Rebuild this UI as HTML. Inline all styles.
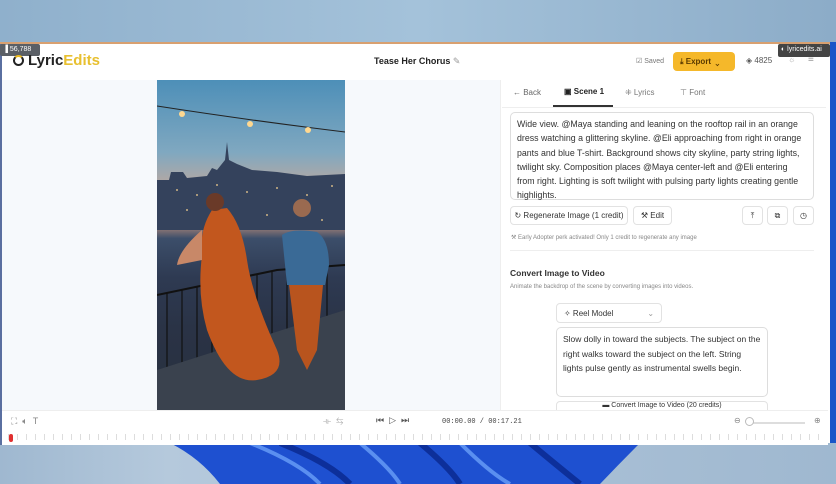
<!DOCTYPE html>
<html><head><meta charset="utf-8"><style>
*{box-sizing:border-box;margin:0;padding:0}
body{width:836px;height:484px;overflow:hidden;position:relative;font-family:"Liberation Sans",sans-serif;background:linear-gradient(90deg,#8fb0cc,#a4c2da 50%,#8cacc8);}
.abs{position:absolute}
.win{left:0;top:42px;width:830px;height:401px;background:#fff;border-top:2px solid #d8a070;}
.t{position:absolute;white-space:nowrap;color:#333}
.btn{position:absolute;border:1px solid #e2e2e2;border-radius:4px;background:#fff;font-size:8px;color:#333;display:flex;align-items:center;justify-content:center;gap:4px}
</style></head><body>
<div class="abs" style="left:0;top:443px;width:836px;height:41px;background:linear-gradient(90deg,#9fb8d0,#b5c9dc 20%,#9fb8d0)"></div>
<svg class="abs" style="left:160px;top:443px" width="490" height="41"><path d="M10 0 L480 0 Q460 20 440 41 L60 41 Q40 15 10 0Z" fill="#1e50d0"/><path d="M90 0 Q140 20 160 41 M200 0 Q230 25 240 41 M300 0 Q330 30 350 41" stroke="#5a8ff0" stroke-width="4" fill="none"/><path d="M120 0 Q170 20 190 41 M260 0 Q290 25 300 41 M370 0 Q400 25 420 41" stroke="#0d2f9a" stroke-width="6" fill="none"/></svg>
<div class="abs" style="left:828px;top:42px;width:8px;height:401px;background:#1a55c8"></div>
<div class="win abs">
 <div class="abs" style="left:0;top:0;width:2px;height:401px;background:#5a6fa0"></div>
 <div class="abs" style="left:0;top:0;width:40px;height:12px;background:#5a5f66;border-radius:2px;color:#fff;font-size:7px;padding:2px 3px">▐ 56,788</div>
 <div class="abs" style="left:13px;top:11px;width:11px;height:11px;border:2px solid #222;border-radius:50%;border-top-color:#e8b820"></div>
 <div class="t" style="left:28px;top:8px;font-size:15px;font-weight:bold;color:#222">Lyric<span style="color:#e8c030">Edits</span></div>
 <div class="t" style="left:374px;top:12px;font-size:9px;font-weight:bold;color:#222">Tease Her Chorus <span style="color:#999;font-weight:normal">✎</span></div>
 <div class="t" style="left:636px;top:13px;font-size:7px;color:#777">☑ Saved</div>
 <div class="abs" style="left:673px;top:8px;width:62px;height:19px;background:#f5b82a;border-radius:4px;font-size:8px;font-weight:bold;color:#5a3a00;padding:5px 7px">⤓ Export &nbsp;⌄</div>
 <div class="t" style="left:746px;top:12px;font-size:8px;color:#555">◈ 4825</div>
 <div class="t" style="left:788px;top:11px;font-size:8px;color:#aaa">☼</div>
 <div class="t" style="left:808px;top:10px;font-size:10px;color:#999">≡</div>
 <div class="abs" style="left:778px;top:0;width:52px;height:13px;background:#444;color:#fff;font-size:7px;padding:2px 3px;border-radius:2px">◐ lyricedits.ai</div>
 <div class="abs" style="left:2px;top:36px;width:498px;height:330px;background:#f6f9fc"></div>
 <div class="abs" style="left:157px;top:36px;width:188px;height:330px;overflow:hidden;background:linear-gradient(180deg,#4d8fb8 0%,#80a8c0 22%,#d8a890 38%,#e0a080 42%,#3c4e6a 48%,#2e3a52 60%,#2a3346 75%,#27303e 100%)">
  <svg width="188" height="330" style="position:absolute;left:0;top:0">
   <path d="M0 26 Q90 40 188 52" stroke="#222" fill="none"/>
   <circle cx="25" cy="34" r="3" fill="#ffd890"/><circle cx="93" cy="44" r="3" fill="#ffd890"/><circle cx="151" cy="50" r="3" fill="#ffd890"/>
   <path d="M0 150 L0 100 L12 100 L14 92 L26 92 L30 98 L50 96 L55 88 L60 90 L68 80 L70 62 L72 80 L80 84 L95 90 L120 92 L150 96 L188 94 L188 150Z" fill="#34425c"/>
   <g fill="#f4d090" opacity=".8"><circle cx="20" cy="110" r="1"/><circle cx="40" cy="115" r="1"/><circle cx="60" cy="105" r="1"/><circle cx="90" cy="112" r="1"/><circle cx="120" cy="108" r="1"/><circle cx="150" cy="115" r="1"/><circle cx="175" cy="106" r="1"/><circle cx="30" cy="130" r="1"/><circle cx="110" cy="135" r="1"/><circle cx="165" cy="140" r="1"/></g>
   <path d="M0 215 L120 190 L188 185" stroke="#111" stroke-width="2" fill="none"/>
   <g stroke="#111" stroke-width="1.2"><path d="M10 213V290M25 210V285M40 207V280M55 204V275M70 201V270M85 198V265M100 195V260M115 192V255M130 190V250M170 186V240"/></g>
   <path d="M0 290 L188 230 L188 330 L0 330Z" fill="#3a424e"/>
   <path d="M55 130 Q42 150 45 175 Q40 215 50 250 Q70 305 100 300 Q130 295 120 270 Q95 215 90 180 Q85 145 70 128Z" fill="#c2571e"/>
   <path d="M45 150 Q22 170 20 185 L45 180Z" fill="#c88868"/>
   <circle cx="58" cy="122" r="9" fill="#6a3a28"/>
   <path d="M125 155 Q135 148 160 152 Q172 160 172 185 L168 205 L130 205 Z" fill="#3a6a96"/>
   <path d="M132 205 L166 205 L160 270 L150 290 L140 270Z" fill="#b8541e"/>
   <circle cx="145" cy="128" r="9" fill="#9a6a50"/>
  </svg>
 </div>
 <div class="abs" style="left:500px;top:36px;width:328px;height:330px;background:#fff;border-left:1px solid #eee"></div>
 <div class="t" style="left:513px;top:44px;font-size:8px;color:#666">← Back</div>
 <div class="t" style="left:564px;top:43px;font-size:8px;color:#222;font-weight:bold">▣ Scene 1</div>
 <div class="abs" style="left:553px;top:61px;width:60px;height:2px;background:#333"></div>
 <div class="t" style="left:625px;top:44px;font-size:8px;color:#777">⁜ Lyrics</div>
 <div class="t" style="left:680px;top:44px;font-size:8px;color:#777">⊤ Font</div>
 <div class="abs" style="left:502px;top:63px;width:324px;height:1px;background:#eee"></div>
 <div class="abs" style="left:510px;top:68px;width:304px;height:88px;border:1px solid #ddd;border-radius:5px;padding:4px 6px;font-size:8.8px;line-height:14.3px;color:#333">Wide view. @Maya standing and leaning on the rooftop rail in an orange dress watching a glittering skyline. @Eli approaching from right in orange pants and blue T-shirt. Background shows city skyline, party string lights, twilight sky. Composition places @Maya center-left and @Eli entering from right. Lighting is soft twilight with pulsing party lights creating gentle highlights.</div>
 <div class="btn" style="left:510px;top:162px;width:118px;height:19px">↻ Regenerate Image (1 credit)</div>
 <div class="btn" style="left:633px;top:162px;width:39px;height:19px">⚒ Edit</div>
 <div class="btn" style="left:742px;top:162px;width:21px;height:19px">⤒</div>
 <div class="btn" style="left:767px;top:162px;width:21px;height:19px">⧉</div>
 <div class="btn" style="left:793px;top:162px;width:21px;height:19px">◷</div>
 <div class="t" style="left:511px;top:190px;font-size:6px;color:#888">⚒ Early Adopter perk activated! Only 1 credit to regenerate any image</div>
 <div class="abs" style="left:510px;top:206px;width:304px;height:1px;background:#eee"></div>
 <div class="t" style="left:510px;top:224px;font-size:8.5px;font-weight:bold;color:#333">Convert Image to Video</div>
 <div class="t" style="left:510px;top:240px;font-size:6px;color:#888">Animate the backdrop of the scene by converting images into videos.</div>
 <div class="btn" style="left:556px;top:259px;width:106px;height:20px;justify-content:flex-start;padding-left:7px;font-size:8px">✧ Reel Model <span style="margin-left:30px;color:#999">⌄</span></div>
 <div class="abs" style="left:556px;top:283px;width:212px;height:70px;border:1px solid #ddd;border-radius:5px;padding:4px 6px;font-size:8.5px;line-height:14.5px;color:#333">Slow dolly in toward the subjects. The subject on the right walks toward the subject on the left. String lights pulse gently as instrumental swells begin.</div>
 <div class="btn" style="left:556px;top:357px;width:212px;height:14px;font-size:7px;align-items:flex-start">▬ Convert Image to Video (20 credits)</div>
 <div class="abs" style="left:2px;top:366px;width:826px;height:35px;background:#fff;border-top:1px solid #eee"></div>
 <div class="t" style="left:11px;top:372px;font-size:9px;color:#888">⛶ &nbsp;🔈︎ &nbsp;T</div>
 <div class="t" style="left:323px;top:372px;font-size:9px;color:#aaa">⟛ &nbsp;⇆</div>
 <div class="t" style="left:376px;top:371px;font-size:9px;color:#555">⏮︎ &nbsp;▷ &nbsp;⏭︎</div>
 <div class="t" style="left:442px;top:374px;font-size:7px;color:#444;font-family:'Liberation Mono',monospace">00:00.00 / 00:17.21</div>
 <div class="t" style="left:734px;top:372px;font-size:8px;color:#888">⊖</div>
 <div class="abs" style="left:747px;top:378px;width:58px;height:2px;background:#ddd"></div>
 <div class="abs" style="left:745px;top:373px;width:9px;height:9px;border:1px solid #bbb;border-radius:50%;background:#fff"></div>
 <div class="t" style="left:814px;top:372px;font-size:8px;color:#888">⊕</div>
 <div class="abs" style="left:8px;top:390px;width:818px;height:6px;background:repeating-linear-gradient(90deg,#ddd 0 1px,transparent 1px 9px)"></div>
 <div class="abs" style="left:9px;top:390px;width:4px;height:8px;background:#e03030;border-radius:2px"></div>
</div>
</body></html>
